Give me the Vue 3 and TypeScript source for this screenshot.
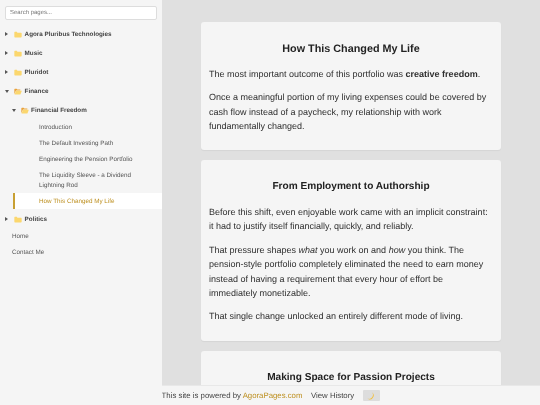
<script setup lang="ts">
interface Leaf { label: string; active?: boolean }
const leaves: Leaf[] = [
  { label: 'Introduction' },
  { label: 'The Default Investing Path' },
  { label: 'Engineering the Pension Portfolio' },
  { label: 'The Liquidity Sleeve - a Dividend Lightning Rod' },
  { label: 'How This Changed My Life', active: true },
]
const closedTop = ['Agora Pluribus Technologies', 'Music', 'Pluridot']
</script>

<template>
  <div class="page">
    <aside class="sidebar">
      <div class="search-wrap"><input class="search" placeholder="Search pages..." /></div>
      <nav class="tree">
        <div v-for="t in closedTop" :key="t" class="folder">
          <span class="arrow-box"><span class="arrow closed"></span></span>
          <svg class="ico" viewBox="0 0 12 10"><path d="M0.5 2 Q0.5 1 1.5 1 H4.2 L5.2 2.2 H10.5 Q11.5 2.2 11.5 3.2 V8.5 Q11.5 9.5 10.5 9.5 H1.5 Q0.5 9.5 0.5 8.5 Z" fill="#fbd76e"/></svg>
          <span>{{ t }}</span>
        </div>
        <div class="folder">
          <span class="arrow-box"><span class="arrow open"></span></span>
          <svg class="ico" viewBox="0 0 12 10"><path d="M0.5 2 Q0.5 1 1.5 1 H4 L5 2 H9.5 V3.6 H3 L0.5 9 Z" fill="#e9a23b"/><path d="M3 4 H11.8 L9.6 9.5 H0.8 Z" fill="#fbd76e"/></svg>
          <span>Finance</span>
        </div>
        <div class="sub">
          <div class="folder">
            <span class="arrow-box"><span class="arrow open"></span></span>
            <svg class="ico" viewBox="0 0 12 10"><path d="M0.5 2 Q0.5 1 1.5 1 H4 L5 2 H9.5 V3.6 H3 L0.5 9 Z" fill="#e9a23b"/><path d="M3 4 H11.8 L9.6 9.5 H0.8 Z" fill="#fbd76e"/></svg>
            <span>Financial Freedom</span>
          </div>
          <a v-for="l in leaves" :key="l.label" class="leaf" :class="{ active: l.active }">{{ l.label }}</a>
        </div>
        <div class="folder">
          <span class="arrow-box"><span class="arrow closed"></span></span>
          <svg class="ico" viewBox="0 0 12 10"><path d="M0.5 2 Q0.5 1 1.5 1 H4.2 L5.2 2.2 H10.5 Q11.5 2.2 11.5 3.2 V8.5 Q11.5 9.5 10.5 9.5 H1.5 Q0.5 9.5 0.5 8.5 Z" fill="#fbd76e"/></svg>
          <span>Politics</span>
        </div>
        <a class="plain">Home</a>
        <a class="plain">Contact Me</a>
      </nav>
    </aside>

    <main class="main">
      <section class="card">
        <h2>How This Changed My Life</h2>
        <p>The most important outcome of this portfolio was <strong>creative freedom</strong>.</p>
        <p>Once a meaningful portion of my living expenses could be covered by cash flow instead of a paycheck, my relationship with work fundamentally changed.</p>
      </section>
      <section class="card">
        <h3>From Employment to Authorship</h3>
        <p>Before this shift, even enjoyable work came with an implicit constraint: it had to justify itself financially, quickly, and reliably.</p>
        <p>That pressure shapes <em>what</em> you work on and <em>how</em> you think. The pension-style portfolio completely eliminated the need to earn money instead of having a requirement that every hour of effort be immediately monetizable.</p>
        <p>That single change unlocked an entirely different mode of living.</p>
      </section>
      <section class="card">
        <h3>Making Space for Passion Projects</h3>
      </section>
    </main>

    <footer class="footer">
      <span>This site is powered by <a class="brand">AgoraPages.com</a></span>
      <span>View History</span>
      <button class="theme" type="button">
        <svg viewBox="0 0 10 10" width="8" height="8"><path d="M6.2 0.3 A5 5 0 0 1 0.6 8.2 A4.4 4.4 0 0 0 6.2 0.3 Z" fill="#f2bf3a"/></svg>
      </button>
    </footer>
  </div>
</template>

<style>
html, body { margin: 0; overflow: hidden; }
</style>

<style scoped>
.page {
  position: relative;
  display: flex;
  width: 540px;
  height: 405px;
  overflow: hidden;
  font-family: "Liberation Sans", Arial, sans-serif;
  text-rendering: geometricPrecision;
  color: #333;
  background: #e0e0e0;
  filter: blur(0.3px);
}
.sidebar {
  width: 162px;
  flex: none;
  background: #f5f5f5;
  box-sizing: border-box;
  padding: 6px 0 0;
  z-index: 2;
}
.search-wrap { padding: 0 5px; }
.search {
  display: block;
  width: 100%;
  height: 14px;
  box-sizing: border-box;
  border: 1px solid #ddd;
  border-radius: 2px;
  background: #fff;
  padding: 0 4px;
  font: 6px "Liberation Sans", Arial, sans-serif;
  text-rendering: geometricPrecision;
}
.search::placeholder { color: #777; }
.tree { margin-top: 4px; display: flex; flex-direction: column; }
.folder {
  display: flex;
  align-items: center;
  box-sizing: border-box;
  height: 19px;
  padding-left: 5px;
  padding-top: 1px;
  font-size: 6.3px;
  font-weight: 700;
  color: #444;
}
.arrow-box { width: 9px; flex: none; display: flex; align-items: center; }
.arrow { width: 0; height: 0; flex: none; }
.arrow.closed {
  border-left: 3.5px solid #555;
  border-top: 2.4px solid transparent;
  border-bottom: 2.4px solid transparent;
}
.arrow.open {
  border-top: 3.5px solid #555;
  border-left: 2.4px solid transparent;
  border-right: 2.4px solid transparent;
}
.ico { width: 8px; height: 7px; margin-right: 2.6px; flex: none; }
.sub .folder { padding-left: 11.5px; }
.leaf {
  display: block;
  padding: 3.5px 8px 2.5px 39px;
  font-size: 6.3px;
  line-height: 10px;
  color: #555;
}
.leaf.active {
  margin-left: 13px;
  padding-left: 24px;
  background: #fff;
  border-left: 2px solid #c8a033;
  color: #bd8f1f;
}
.plain {
  display: block;
  padding: 4px 12px 2px;
  font-size: 6.3px;
  line-height: 10px;
  color: #555;
}
.main {
  flex: 1;
  min-width: 0;
  box-sizing: border-box;
  padding: 22px 39px 0;
  display: flex;
  flex-direction: column;
  gap: 10px;
}
.card {
  flex: none;
  background: #f5f5f5;
  border-radius: 3px;
  padding: 19px 8px 7.8px;
  box-shadow: 0 1px 1px rgba(0, 0, 0, 0.05);
}
h2, h3 {
  margin: 0 0 9.8px;
  text-align: center;
  line-height: 16px;
  color: #222;
}
h2 { font-size: 10.8px; }
h3 { font-size: 10.1px; }
p {
  margin: 0 0 9px;
  font-size: 9px;
  line-height: 14.4px;
  color: #2e2e2e;
}
.footer {
  position: absolute;
  left: 161.6px;
  right: 0;
  bottom: 0;
  height: 20px;
  background: #f5f5f5;
  border-top: 1px solid #e8e8e8;
  box-sizing: border-box;
  display: flex;
  align-items: center;
  gap: 8.5px;
  font-size: 7.8px;
  color: #444;
  white-space: nowrap;
}
.brand { color: #bd8f1f; }
.theme {
  width: 17px;
  height: 11px;
  padding: 0;
  border: none;
  border-radius: 1px;
  background: #ddd;
  display: flex;
  align-items: center;
  justify-content: center;
}
</style>
